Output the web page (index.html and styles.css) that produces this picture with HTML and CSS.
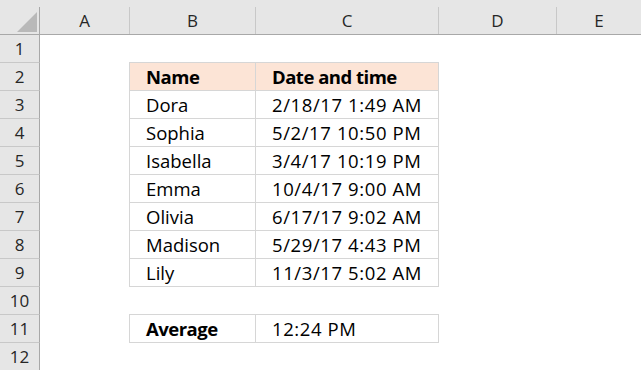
FILE: index.html
```html
<!DOCTYPE html>
<html lang="en">
<head>
  <meta charset="UTF-8" />
  <title>Average date and time</title>
  <link rel="stylesheet" href="styles.css">
</head>
<body>
  <div class="sheet">
    <div class="row head">
      <div class="corner"><span><svg width="20" height="20" viewBox="0 0 20 20"><polygon points="20,0 20,20 0,20" fill="#b9b9b9"/></svg></span></div>
      <div class="first"><span>A</span></div>
      <div><span>B</span></div>
      <div><span>C</span></div>
      <div><span>D</span></div>
      <div><span>E</span></div>
    </div>

    <div class="row"><div class="num">1</div><div></div><div></div><div></div><div></div><div></div></div>

    <div class="row">
      <div class="num">2</div><div></div>
      <div class="cell top title">Name</div>
      <div class="cell top title end">Date and time</div>
      <div></div><div></div>
    </div>
    <div class="row">
      <div class="num">3</div><div></div>
      <div class="cell">Dora</div>
      <div class="cell end date">2/18/17 1:49 AM</div>
      <div></div><div></div>
    </div>
    <div class="row">
      <div class="num">4</div><div></div>
      <div class="cell">Sophia</div>
      <div class="cell end date">5/2/17 10:50 PM</div>
      <div></div><div></div>
    </div>
    <div class="row">
      <div class="num">5</div><div></div>
      <div class="cell">Isabella</div>
      <div class="cell end date">3/4/17 10:19 PM</div>
      <div></div><div></div>
    </div>
    <div class="row">
      <div class="num">6</div><div></div>
      <div class="cell">Emma</div>
      <div class="cell end date">10/4/17 9:00 AM</div>
      <div></div><div></div>
    </div>
    <div class="row">
      <div class="num">7</div><div></div>
      <div class="cell">Olivia</div>
      <div class="cell end date">6/17/17 9:02 AM</div>
      <div></div><div></div>
    </div>
    <div class="row">
      <div class="num">8</div><div></div>
      <div class="cell">Madison</div>
      <div class="cell end date">5/29/17 4:43 PM</div>
      <div></div><div></div>
    </div>
    <div class="row">
      <div class="num">9</div><div></div>
      <div class="cell">Lily</div>
      <div class="cell end date">11/3/17 5:02 AM</div>
      <div></div><div></div>
    </div>

    <div class="row"><div class="num">10</div><div></div><div></div><div></div><div></div><div></div></div>

    <div class="row">
      <div class="num">11</div><div></div>
      <div class="cell top bold">Average</div>
      <div class="cell top end date">12:24 PM</div>
      <div></div><div></div>
    </div>

    <div class="row"><div class="num">12</div><div></div><div></div><div></div><div></div><div></div></div>
  </div>
</body>
</html>
```

FILE: styles.css
```css
body {
  margin: 0;
  background: #fff;
  color: #000;
  font-family: "Open Sans", "Liberation Sans", sans-serif;
  overflow: hidden;
}
.sheet { width: 641px; }

.row {
  display: grid;
  grid-template-columns: 40px 89px 126px 183px 118px 1fr;
  height: 28px;
}
.row > div { box-sizing: border-box; }

/* column letters */
.head { height: 35px; }
.head > div {
  padding-top: 7px;
  background: #e6e6e6;
  border-bottom: 1px solid #a8a8a8;
}
.head span {
  display: flex;
  align-items: center;
  justify-content: center;
  height: 100%;
  border-left: 1px solid #c8c8c8;
  font-size: 17px;
  line-height: 20px;
  color: #262626;
}
.head .first span { border-left: none; }
.head .corner span {
  border-left: none;
  border-right: 1px solid #a8a8a8;
  align-items: flex-end;
  justify-content: flex-end;
  padding: 0 2px 2px 0;
  box-sizing: border-box;
}
.corner svg { display: block; }

/* row numbers */
.num {
  display: flex;
  align-items: center;
  justify-content: center;
  background: #e6e6e6;
  border-right: 1px solid #a8a8a8;
  border-bottom: 1px solid #c8c8c8;
  font-size: 17px;
  line-height: 20px;
  color: #262626;
}

/* bordered table cells */
.cell {
  display: flex;
  align-items: center;
  padding-left: 16px;
  font-size: 18.5px;
  line-height: 20px;
  white-space: nowrap;
  border-left: 1px solid #d6d6d6;
  border-bottom: 1px solid #d6d6d6;
}
.cell.top { box-shadow: 0 -1px 0 #d6d6d6; }
.cell.end { box-shadow: 1px 0 0 #d6d6d6; }
.cell.top.end { box-shadow: 0 -1px 0 #d6d6d6, 1px 0 0 #d6d6d6, 1px -1px 0 #d6d6d6; }
.date { letter-spacing: 0.6px; }
.title { background: #fce4d6; }
.title, .bold { font-weight: 700; letter-spacing: -0.5px; }
```
